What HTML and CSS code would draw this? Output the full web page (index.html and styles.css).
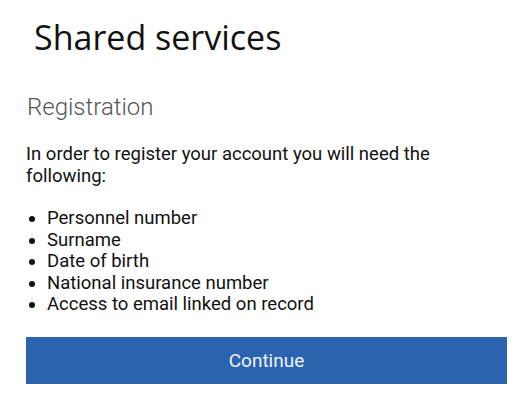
FILE: index.html
```html
<!DOCTYPE html>
<html lang="en">
<head>
<meta charset="utf-8">
<title>Shared services</title>
<link rel="stylesheet" href="styles.css">
</head>
<body>
<main class="page">
  <h1 class="brand">Shared services</h1>
  <h2 class="title">Registration</h2>
  <p class="intro">In order to register your account you will need the following:</p>
  <ul class="reqs">
    <li>Personnel number</li>
    <li>Surname</li>
    <li>Date of birth</li>
    <li>National insurance number</li>
    <li>Access to email linked on record</li>
  </ul>
  <button class="continue" type="button">Continue</button>
</main>
</body>
</html>
```

FILE: styles.css
```css
html, body {
  margin: 0;
  padding: 0;
  background: #fff;
}
.page {
  padding: 14px 16px 0 26px;
  display: flex;
  flex-direction: column;
  align-items: flex-start;
  font-family: Roboto, "Liberation Sans", sans-serif;
  color: #111;
}
.brand {
  margin: 0 0 0 8px;
  font-family: "Open Sans", "Noto Sans", sans-serif;
  font-weight: 400;
  font-size: 34px;
  line-height: 46px;
  color: #111;
}
.title {
  margin: 33px 0 0 1px;
  font-weight: 300;
  font-size: 24px;
  line-height: 28px;
  color: #555;
}
.intro {
  margin: 23px 0 0;
  font-size: 18.5px;
  line-height: 21.5px;
  max-width: 440px;
}
.reqs {
  margin: 21px 0 0;
  padding-left: 21px;
  font-size: 18.5px;
  line-height: 21.5px;
}
.continue {
  margin-top: 21.5px;
  width: 481px;
  height: 47px;
  border: 0;
  background: #2c63ae;
  color: #eef4ff;
  font-family: Roboto, "Liberation Sans", sans-serif;
  font-size: 19px;
}
```
